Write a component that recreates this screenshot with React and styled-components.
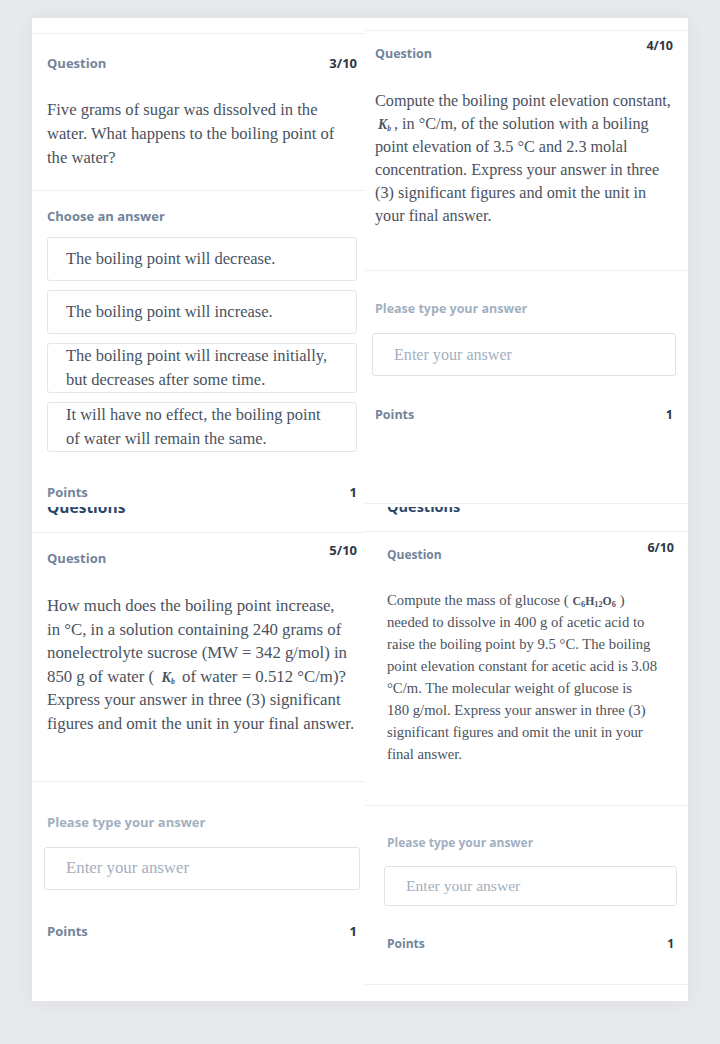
import styled, { createGlobalStyle } from "styled-components";

const GlobalStyle = createGlobalStyle`
	html, body {
		margin: 0;
		padding: 0;
		background: #e8e9ed;
	}
	#root {
		min-height: 1044px;
	}
`;

const Page = styled.div`
	padding: 18px 32px 43px 32px;
	height: 1044px;
	box-sizing: border-box;
`;

const Sheet = styled.div`
	display: grid;
	grid-template-columns: 333px 323px;
	height: 983px;
	background: #ffffff;
	box-shadow: 0 0 18px rgba(40, 50, 70, 0.06);
	overflow: hidden;
`;

const Column = styled.div`
	display: flex;
	flex-direction: column;
`;

const Panel = styled.section`
	--pl: ${({ $l }) => $l}px;
	--pr: ${({ $r }) => $r}px;
	display: flex;
	flex-direction: column;
	padding-bottom: ${({ $bottom }) => $bottom || 0}px;
	border-bottom: ${({ $line }) => ($line ? "1px solid #eef1f4" : "none")};
	font-family: "Open Sans", "Noto Sans", sans-serif;
`;

const TopBand = styled.div`
	height: ${({ $h }) => $h}px;
	border-bottom: 1px solid #eef1f4;
	flex: none;
`;

const Header = styled.div`
	display: flex;
	justify-content: space-between;
	align-items: flex-start;
	padding: ${({ $top }) => $top}px var(--pr) 0 var(--pl);
`;

const Label = styled.div`
	font-weight: 700;
	font-size: ${({ $size }) => $size || 13}px;
	line-height: 18px;
	color: ${({ $light }) => ($light ? "#a2b0c1" : "#72849b")};
	margin-top: ${({ $drop }) => $drop || 0}px;
`;

const Count = styled.div`
	font-weight: 700;
	font-size: ${({ $size }) => $size || 13}px;
	line-height: 18px;
	color: #2d3748;
`;

const QuestionText = styled.div`
	font-family: "Liberation Serif", "DejaVu Serif", serif;
	font-size: ${({ $size }) => $size}px;
	line-height: ${({ $lh }) => $lh}px;
	color: #4a5260;
	white-space: nowrap;
	padding: ${({ $top }) => $top}px var(--pr) ${({ $bottom }) => $bottom}px
		var(--pl);
	border-bottom: 1px solid #eef1f4;

	& sub {
		line-height: 0;
		vertical-align: -0.3em;
	}
`;

const Var = styled.span`
	font-style: italic;
	font-weight: 700;
	font-size: 0.85em;
	line-height: 0;
	margin: 0 3px;

	& sub {
		font-size: 0.55em;
	}
`;

const Formula = styled.span`
	font-weight: 700;
	font-size: 0.8em;
	line-height: 0;
	margin: 0 4px;

	& sub {
		font-size: 0.7em;
	}
`;

const AnswerSection = styled.div`
	display: flex;
	flex-direction: column;
	padding: ${({ $top }) => $top}px var(--pr) 0 var(--pl);
`;

const OptionList = styled.div`
	display: flex;
	flex-direction: column;
	gap: 9px;
	margin-top: 12px;
`;

const Option = styled.div`
	display: flex;
	align-items: center;
	min-height: 42px;
	padding: 0 18px;
	border: 1px solid #e2e6eb;
	border-radius: 3px;
	font-family: "Liberation Serif", "DejaVu Serif", serif;
	font-size: 16.5px;
	line-height: 24px;
	color: #4a5260;
`;

const AnswerInput = styled.input`
	box-sizing: border-box;
	height: ${({ $h }) => $h}px;
	margin: ${({ $gap }) => $gap}px -3px 0 -3px;
	padding: 0 0 0 21px;
	border: 1px solid #dde3ea;
	border-radius: 3px;
	font-family: "Liberation Serif", "DejaVu Serif", serif;
	font-size: ${({ $size }) => $size}px;
	color: #4a5260;
	background: #fff;
	outline: none;

	&::placeholder {
		color: #a3b0bf;
	}
`;

const PointsRow = styled.div`
	display: flex;
	justify-content: space-between;
	margin-top: ${({ $gap }) => $gap}px;
	padding: 0 var(--pr) 0 var(--pl);
`;

const Strip = styled.div`
	height: ${({ $h }) => $h}px;
	border-bottom: 1px solid #eef1f4;
	padding: ${({ $top }) => $top}px 0 0 ${({ $l }) => $l}px;
	box-sizing: border-box;
	flex: none;
`;

const StripClip = styled.div`
	height: 8px;
	overflow: hidden;
`;

const StripTitle = styled.div`
	font-family: "Open Sans", "Noto Sans", sans-serif;
	font-weight: 700;
	font-size: ${({ $size }) => $size}px;
	line-height: 20px;
	color: #2b4668;
	margin-top: ${({ $shift }) => $shift}px;
`;

const Points = ({ gap, size }) => (
	<PointsRow $gap={gap}>
		<Label $size={size}>Points</Label>
		<Count $size={size}>1</Count>
	</PointsRow>
);

const options = [
	["The boiling point will decrease."],
	["The boiling point will increase."],
	["The boiling point will increase initially,", "but decreases after some time."],
	["It will have no effect, the boiling point", "of water will remain the same."],
];

const Lines = ({ lines }) =>
	lines.map((line, i) => (
		<span key={i}>
			{line}
			{i < lines.length - 1 && <br />}
		</span>
	));

const Kb = () => (
	<Var>
		K<sub>b</sub>
	</Var>
);

export default function App() {
	return (
		<>
			<GlobalStyle />
			<Page>
				<Sheet>
					<Column>
						<Panel $l={15} $r={8}>
							<TopBand $h={15} />
							<Header $top={20}>
								<Label>Question</Label>
								<Count>3/10</Count>
							</Header>
							<QuestionText $size={16.6} $lh={24} $top={26} $bottom={20}>
								<Lines
									lines={[
										"Five grams of sugar was dissolved in the",
										"water. What happens to the boiling point of",
										"the water?",
									]}
								/>
							</QuestionText>
							<AnswerSection $top={16}>
								<Label>Choose an answer</Label>
								<OptionList>
									{options.map((lines) => (
										<Option key={lines[0]}>
											<div>
												<Lines lines={lines} />
											</div>
										</Option>
									))}
								</OptionList>
							</AnswerSection>
							<Points gap={31} />
						</Panel>
						<Strip $h={32} $l={15} $top={6}>
							<StripClip>
								<StripTitle $size={15.5} $shift={-10}>
									Questions
								</StripTitle>
							</StripClip>
						</Strip>
						<Panel $l={15} $r={8}>
							<Header $top={8}>
								<Label $drop={8}>Question</Label>
								<Count>5/10</Count>
							</Header>
							<QuestionText $size={16.8} $lh={23.6} $top={27} $bottom={45}>
								How much does the boiling point increase,
								<br />
								in °C, in a solution containing 240 grams of
								<br />
								nonelectrolyte sucrose (MW = 342 g/mol) in
								<br />
								850 g of water ( <Kb /> of water = 0.512 °C/m)?
								<br />
								Express your answer in three (3) significant
								<br />
								figures and omit the unit in your final answer.
							</QuestionText>
							<AnswerSection $top={31}>
								<Label $light>Please type your answer</Label>
								<AnswerInput
									$h={43}
									$gap={16}
									$size={16.8}
									placeholder="Enter your answer"
								/>
							</AnswerSection>
							<Points gap={32} />
						</Panel>
					</Column>
					<Column>
						<Panel $l={10} $r={15} $bottom={79} $line>
							<TopBand $h={12} />
							<Header $top={6}>
								<Label $size={12.5} $drop={8}>
									Question
								</Label>
								<Count $size={12.5}>4/10</Count>
							</Header>
							<QuestionText $size={16.2} $lh={23} $top={27} $bottom={42}>
								Compute the boiling point elevation constant,
								<br />
								<Kb />, in °C/m, of the solution with a boiling
								<br />
								point elevation of 3.5 °C and 2.3 molal
								<br />
								concentration. Express your answer in three
								<br />
								(3) significant figures and omit the unit in
								<br />
								your final answer.
							</QuestionText>
							<AnswerSection $top={29}>
								<Label $light $size={12.5}>
									Please type your answer
								</Label>
								<AnswerInput
									$h={43}
									$gap={15}
									$size={16.1}
									placeholder="Enter your answer"
								/>
							</AnswerSection>
							<Points gap={30} size={12.5} />
						</Panel>
						<Strip $h={28} $l={22} $top={3}>
							<StripClip>
								<StripTitle $size={14.5} $shift={-10}>
									Questions
								</StripTitle>
							</StripClip>
						</Strip>
						<Panel $l={22} $r={14} $bottom={31} $line>
							<Header $top={7}>
								<Label $size={12} $drop={7}>
									Question
								</Label>
								<Count $size={12.5}>6/10</Count>
							</Header>
							<QuestionText $size={14.7} $lh={22} $top={25} $bottom={40}>
								Compute the mass of glucose (
								<Formula>
									C<sub>6</sub>H<sub>12</sub>O<sub>6</sub>
								</Formula>
								)
								<br />
								needed to dissolve in 400 g of acetic acid to
								<br />
								raise the boiling point by 9.5 °C. The boiling
								<br />
								point elevation constant for acetic acid is 3.08
								<br />
								°C/m. The molecular weight of glucose is
								<br />
								180 g/mol. Express your answer in three (3)
								<br />
								significant figures and omit the unit in your
								<br />
								final answer.
							</QuestionText>
							<AnswerSection $top={28}>
								<Label $light $size={12}>
									Please type your answer
								</Label>
								<AnswerInput
									$h={40}
									$gap={14}
									$size={15.6}
									placeholder="Enter your answer"
								/>
							</AnswerSection>
							<Points gap={29} size={12} />
						</Panel>
					</Column>
				</Sheet>
			</Page>
		</>
	);
}
